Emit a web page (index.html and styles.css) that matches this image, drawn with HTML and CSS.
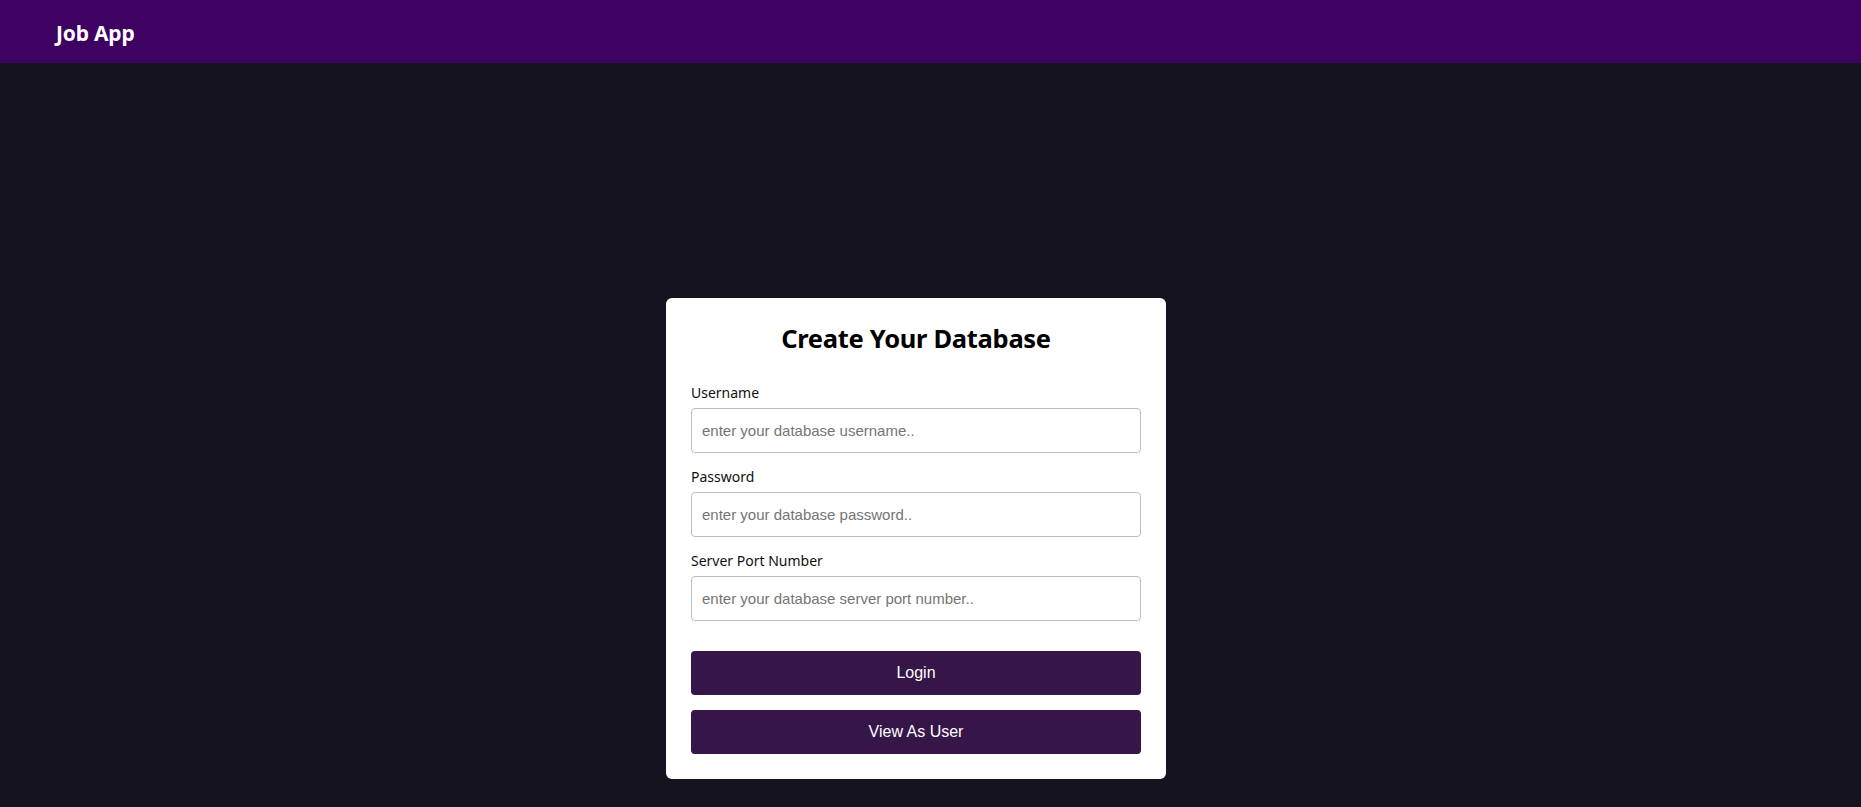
FILE: index.html
```html
<!DOCTYPE html>
<html lang="en">
<head>
<meta charset="utf-8">
<title>Job App</title>
<link rel="stylesheet" href="styles.css">
</head>
<body>
<header class="topbar">
  <span class="brand">Job App</span>
</header>
<main class="main">
  <form class="card">
    <h1 class="title">Create Your Database</h1>
    <div class="field">
      <label class="label" for="u">Username</label>
      <input class="input" id="u" type="text" placeholder="enter your database username..">
    </div>
    <div class="field">
      <label class="label" for="p">Password</label>
      <input class="input" id="p" type="password" placeholder="enter your database password..">
    </div>
    <div class="field">
      <label class="label" for="s">Server Port Number</label>
      <input class="input" id="s" type="text" placeholder="enter your database server port number..">
    </div>
    <div class="actions">
      <button class="btn" type="button">Login</button>
      <button class="btn" type="button">View As User</button>
    </div>
  </form>
</main>
</body>
</html>
```

FILE: styles.css
```css
* { box-sizing: border-box; }

html, body {
  margin: 0;
  padding: 0;
  background: #15131f;
  font-family: "Noto Sans", "DejaVu Sans", sans-serif;
}

.topbar {
  height: 63px;
  background: #3e0061;
  display: flex;
  align-items: center;
  padding: 2px 0 0 56px;
}

.brand {
  color: #ffffff;
  font-weight: 700;
  font-size: 21px;
  letter-spacing: -0.2px;
}

.main {
  display: flex;
  justify-content: center;
  padding: 235px 29px 0 0;
}

.card {
  width: 500px;
  background: #ffffff;
  border-radius: 6px;
  padding: 24px 25px 25px;
  display: flex;
  flex-direction: column;
}

.title {
  margin: 0 0 29px;
  text-align: center;
  font-size: 25.5px;
  line-height: 32px;
  font-weight: 700;
  color: #000;
  letter-spacing: -0.3px;
}

.field {
  display: flex;
  flex-direction: column;
  margin-bottom: 14px;
}

.field:nth-of-type(3) { margin-bottom: 0; }

.label {
  font-size: 14px;
  line-height: 20px;
  color: #111;
  margin-bottom: 5px;
}

.input {
  height: 45px;
  width: 100%;
  border: 1px solid #bdbdbd;
  border-radius: 4px;
  padding: 0 10px;
  font-family: "Liberation Sans", Arial, sans-serif;
  font-size: 15px;
  color: #222;
  background: #fff;
}

.input::placeholder { color: #757575; }

.actions {
  display: flex;
  flex-direction: column;
  gap: 15px;
  margin-top: 30px;
}

.btn {
  height: 44px;
  width: 100%;
  border: none;
  border-radius: 4px;
  background: #361548;
  color: #ffffff;
  font-family: "Liberation Sans", Arial, sans-serif;
  font-size: 16px;
  cursor: pointer;
}
```
